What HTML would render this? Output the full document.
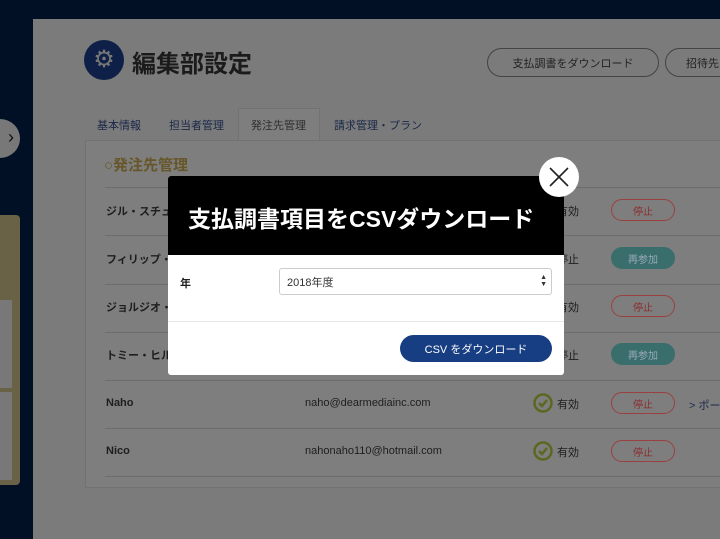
<!DOCTYPE html>
<html><head><meta charset="utf-8"><style>
*{margin:0;padding:0;box-sizing:border-box}
body{width:720px;height:524px;overflow:hidden;background:#021026;font-family:"Liberation Sans","Noto Sans CJK JP",sans-serif;position:relative}
.abs{position:absolute;white-space:nowrap}
.page{left:33px;top:19px;width:700px;height:520px;background:#7b7b7b}
.card{left:85px;top:140px;width:650px;height:348px;background:#7e7e7e;border:1px solid #727272}
.btn{border:1px solid #444;border-radius:15px;height:29px;font-size:11px;color:#222;display:flex;align-items:center;justify-content:center}
.tab{font-size:11px;color:#1a2848;top:117px}
.line{left:105px;width:630px;height:1px;background:#6c6c6c}
.name{left:106px;font-size:11px;font-weight:bold;color:#1e1e1e}
.stop{left:611px;width:64px;height:22px;border:1.5px solid #9a4040;border-radius:11px;color:#8a2e2e;font-size:10px;display:flex;align-items:center;justify-content:center}
.re{left:611px;width:64px;height:22px;background:#3a6e6c;border-radius:11px;color:#9ab;font-size:10px;display:flex;align-items:center;justify-content:center}
.ok{left:557px;font-size:11px;color:#1e1e1e}
</style></head><body>
<div class="abs page"></div>
<div class="abs" style="left:-20px;top:119px;width:40px;height:39px;border-radius:50%;background:#787878;color:#111;font-size:18px;line-height:37px;text-align:right;padding-right:6px">›</div>
<div class="abs" style="left:-5px;top:215px;width:25px;height:270px;background:#6a6246;border-radius:4px"></div>
<div class="abs" style="left:-5px;top:300px;width:17px;height:88px;background:#787878"></div>
<div class="abs" style="left:-5px;top:392px;width:17px;height:88px;background:#787878"></div>
<div class="abs" style="left:84px;top:40px;width:40px;height:40px;border-radius:50%;background:#0e2048;color:#777;font-size:24px;text-align:center;line-height:40px">⚙</div>
<div class="abs" style="left:132px;top:44px;font-size:24px;font-weight:bold;color:#1b1b1b">編集部設定</div>
<div class="abs btn" style="left:487px;top:48px;width:172px">支払調書をダウンロード</div>
<div class="abs btn" style="left:665px;top:48px;width:90px;justify-content:flex-start;padding-left:20px">招待先</div>
<div class="abs" style="left:238px;top:108px;width:82px;height:33px;background:#7e7e7e;border:1px solid #727272;border-bottom:none"></div>
<div class="abs tab" style="left:97px">基本情報</div>
<div class="abs tab" style="left:169px">担当者管理</div>
<div class="abs tab" style="left:251px;color:#2e2e2e">発注先管理</div>
<div class="abs tab" style="left:334px">請求管理・プラン</div>
<div class="abs card"></div>
<div class="abs" style="left:104px;top:154px;font-size:15px;font-weight:bold;color:#665628">○発注先管理</div>
<div class="abs line" style="top:187px"></div>
<div class="abs line" style="top:235px"></div>
<div class="abs line" style="top:284px"></div>
<div class="abs line" style="top:332px"></div>
<div class="abs line" style="top:380px"></div>
<div class="abs line" style="top:428px"></div>
<div class="abs line" style="top:476px"></div>
<div class="abs name" style="top:203px">ジル・スチュ</div>
<div class="abs name" style="top:251px">フィリップ・</div>
<div class="abs name" style="top:299px">ジョルジオ・</div>
<div class="abs name" style="top:347px">トミー・ヒル</div>
<div class="abs name" style="top:397px">Naho</div>
<div class="abs name" style="top:445px">Nico</div>
<div class="abs" style="left:305px;top:397px;font-size:11px;color:#1e1e1e">naho@dearmediainc.com</div>
<div class="abs" style="left:305px;top:445px;font-size:11px;color:#1e1e1e">nahonaho110@hotmail.com</div>
<div class="abs ok" style="top:203px">有効</div><div class="abs ok" style="top:251px">停止</div>
<div class="abs ok" style="top:299px">有効</div><div class="abs ok" style="top:347px">停止</div>
<div class="abs ok" style="top:396px">有効</div><div class="abs ok" style="top:444px">有効</div>
<svg class="abs" style="left:533px;top:393px" width="20" height="20"><circle cx="10" cy="10" r="8.5" fill="none" stroke="#5a6820" stroke-width="2.5"/><path d="M6 10l3 3 5-6" fill="none" stroke="#5a6820" stroke-width="2.5"/></svg>
<svg class="abs" style="left:533px;top:441px" width="20" height="20"><circle cx="10" cy="10" r="8.5" fill="none" stroke="#5a6820" stroke-width="2.5"/><path d="M6 10l3 3 5-6" fill="none" stroke="#5a6820" stroke-width="2.5"/></svg>
<div class="abs stop" style="top:199px">停止</div>
<div class="abs re" style="top:247px">再参加</div>
<div class="abs stop" style="top:295px">停止</div>
<div class="abs re" style="top:343px">再参加</div>
<div class="abs stop" style="top:392px">停止</div>
<div class="abs stop" style="top:440px">停止</div>
<div class="abs" style="left:689px;top:397px;font-size:11px;color:#1a2848">&gt; ポー</div>

<div class="abs" style="left:168px;top:176px;width:396px;height:199px;background:#fff;border-radius:3px;overflow:hidden">
 <div style="height:79px;background:#000;color:#fff;font-size:23px;font-weight:bold;padding:24px 0 0 20px">支払調書項目をCSVダウンロード</div>
 <div class="abs" style="left:12px;top:99px;font-size:11px;font-weight:bold;color:#222">年</div>
 <div class="abs" style="left:111px;top:92px;width:273px;height:27px;border:1px solid #ccc;border-radius:3px;font-size:11px;color:#333;padding:5px 7px">2018年度<span style="position:absolute;right:4px;top:5px;font-size:7px;line-height:7px">▲<br>▼</span></div>
 <div class="abs" style="left:0;top:145px;width:396px;height:1px;background:#e8e8e8"></div>
 <div class="abs" style="left:232px;top:159px;width:152px;height:27px;background:#173e82;border-radius:14px;color:#fff;font-size:11px;display:flex;align-items:center;justify-content:center">CSV をダウンロード</div>
</div>
<div class="abs" style="left:539px;top:157px;width:40px;height:40px;border-radius:50%;background:#fff"></div>
<svg class="abs" style="left:539px;top:157px" width="40" height="40"><path d="M11 11L29 29M29 11L11 29" stroke="#222" stroke-width="1.6"/></svg>
</body></html>
